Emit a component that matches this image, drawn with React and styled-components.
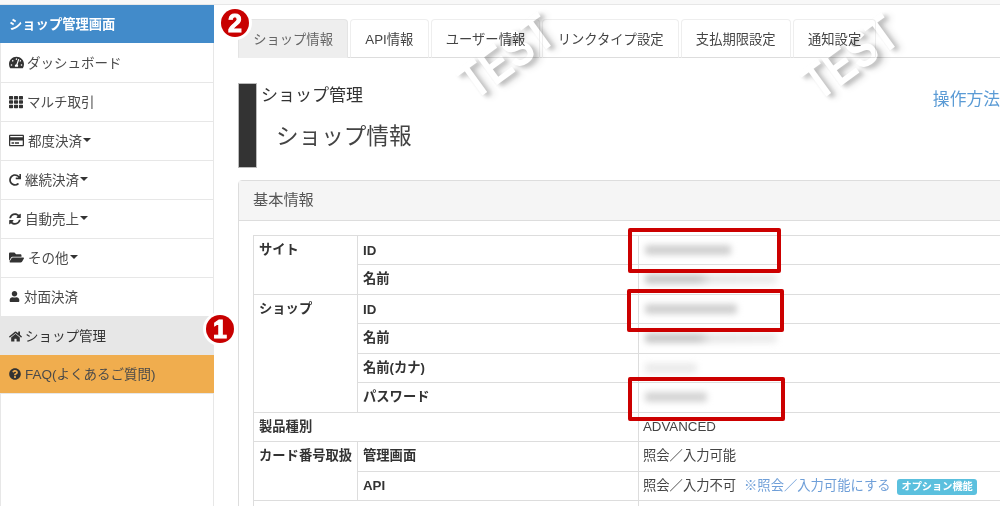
import React from "react";
import styled, { createGlobalStyle } from "styled-components";
import {
  FaTachometerAlt, FaTh, FaRegCreditCard, FaRedo, FaSyncAlt, FaFolderOpen,
  FaUser, FaHome, FaQuestionCircle,
} from "react-icons/fa";

const Global = createGlobalStyle`
  html, body { margin: 0; padding: 0; background: #fff; height: 100%; overflow: hidden; }
  body { font-family: "Liberation Sans", "Noto Sans CJK JP", sans-serif; font-size: 13.3px; color: #333; }
  * { box-sizing: border-box; }
`;

const Page = styled.div`
  position: relative;
  width: 1000px;
  height: 506px;
  overflow: hidden;
`;
const TopStrip = styled.div`
  height: 5px;
  background: #f8f8f8;
  border-bottom: 1px solid #e7e7e7;
`;
const Body = styled.div`
  display: flex;
  align-items: flex-start;
`;
const Sidebar = styled.nav`
  flex: 0 0 214px;
  height: 501px;
  background: #fff;
  border-right: 1px solid #e7e7e7;
  border-left: 1px solid #e7e7e7;
`;
const Brand = styled.div`
  height: 38px;
  margin: 0 -1px 1px -1px;
  padding: 0 0 2px 9px;
  background: #428bca;
  color: #fff;
  font-weight: 700;
  font-size: 13.3px;
  display: flex;
  align-items: center;
`;
const Item = styled.div`
  height: ${(p) => (p.$active ? 38 : 39)}px;
  display: flex;
  align-items: center;
  gap: ${(p) => p.$gap ?? 4}px;
  padding: 0 0 ${(p) => (p.$active ? 1 : 3)}px ${(p) => (p.$bg ? 9 : 8)}px;
  border-bottom: 1px solid #e7e7e7;
  color: ${(p) => (p.$active ? "#333" : "#4a4a4a")};
  font-size: 13.5px;
  background: ${(p) => p.$bg || "#fff"};
  margin: 0 ${(p) => (p.$bg ? "-1px" : "0")};
  svg { flex: none; color: #333; transform: translateY(1px); }
`;
const Caret = styled.span`
  flex: none;
  margin-left: -3px;
  width: 0;
  height: 0;
  border-top: 4px solid #333;
  border-left: 4px solid transparent;
  border-right: 4px solid transparent;
`;
const Main = styled.main`
  flex: none;
  width: 1100px;
  padding: 14px 0 0 24px;
`;
const Tabs = styled.div`
  display: flex;
  gap: 2px;
  height: 39px;
  border-bottom: 1px solid #ddd;
`;
const Tab = styled.div`
  height: 39px;
  padding: 0 14.2px;
  display: flex;
  align-items: center;
  border: 1px solid ${(p) => (p.$active ? "#e4e4e4" : "#eee")};
  border-bottom-color: ${(p) => (p.$active ? "#eee" : "#ddd")};
  border-radius: 4px 4px 0 0;
  background: ${(p) => (p.$active ? "#eee" : "#fff")};
  color: ${(p) => (p.$active ? "#666" : "#444")};
  font-size: 13.3px;
  white-space: nowrap;
`;
const TitleRow = styled.div`
  display: flex;
  width: 762px;
  margin-top: 25px;
  height: 85px;
`;
const TitleBar = styled.div`
  flex: 0 0 19px;
  background: #333;
  border: 1px solid #bbb;
  margin-right: 4px;
`;
const TitleText = styled.div`
  flex: 1;
  padding-top: 1px;
`;
const Crumb = styled.div`
  font-size: 17px;
  line-height: 24px;
  color: #333;
`;
const PageTitle = styled.h1`
  margin: 13px 0 0 15px;
  font-size: 22.6px;
  line-height: 32px;
  font-weight: 400;
  color: #444;
`;
const HelpLink = styled.a`
  margin-top: 1px;
  font-size: 16.8px;
  line-height: 32px;
  color: #5b9bd5;
  white-space: nowrap;
`;
const Panel = styled.section`
  margin-top: 12px;
  border: 1px solid #ddd;
  border-radius: 4px 0 0 0;
  width: 1000px;
`;
const PanelHead = styled.div`
  height: 40px;
  padding: 0 0 6px 14px;
  display: flex;
  align-items: center;
  background: #f5f5f5;
  border-bottom: 1px solid #ddd;
  font-size: 15.2px;
  color: #555;
`;
const PanelBody = styled.div`
  padding: 14px;
`;
const Table = styled.table`
  width: 100%;
  table-layout: fixed;
  border-collapse: collapse;
  font-size: 13.3px;
  line-height: 18.44px;
  color: #333;
  th, td {
    border: 1px solid #ddd;
    padding: 5px 4px;
    vertical-align: top;
    text-align: left;
    white-space: nowrap;
    overflow: visible;
  }
  th { font-weight: 700; padding-left: 5px; }
  td { color: #444; }
`;
const KeyCell = styled.th`
  && {
    padding-top: 6px;
    padding-bottom: 4px;
  }
`;
const Blurred = styled.span`
  display: block;
  height: 10px;
  margin: 4px 0 4px 2px;
  border-radius: 3px;
  background: ${(p) => p.$tone};
  filter: blur(3px);
`;
const NoteLink = styled.a`
  margin-left: 8px;
  color: #6f9fd8;
`;
const Label = styled.span`
  display: inline-block;
  margin-left: 7px;
  padding: 0 4px;
  height: 16px;
  line-height: 16px;
  border-radius: 3px;
  background: #5bc0de;
  color: #fff;
  font-weight: 700;
  font-size: 10.2px;
`;
const RedBox = styled.div`
  position: absolute;
  z-index: 5;
  left: ${(p) => p.$x}px;
  top: ${(p) => p.$y}px;
  width: ${(p) => p.$w}px;
  height: ${(p) => p.$h}px;
  border: 4px solid #cc0000;
  border-radius: 2px;
`;
const Badge = styled.div`
  position: absolute;
  z-index: 6;
  left: ${(p) => p.$x}px;
  top: ${(p) => p.$y}px;
  width: 28px;
  height: 28px;
  border-radius: 50%;
  background: #c80000;
  color: #fff;
  box-shadow: 0 0 0 3px #fff;
  display: flex;
  align-items: center;
  justify-content: center;
  font-weight: 700;
  font-size: 25px;
  line-height: 1;
  -webkit-text-stroke: 1px #fff;
`;
const Watermark = styled.div`
  position: absolute;
  z-index: 4;
  left: ${(p) => p.$cx - 60}px;
  top: ${(p) => p.$cy - 26}px;
  width: 120px;
  height: 52px;
  display: flex;
  align-items: center;
  justify-content: center;
  transform: rotate(-36deg) scaleX(0.78);
  color: #fff;
  font-weight: 700;
  font-size: 52px;
  line-height: 1;
  -webkit-text-stroke: 2px #fff;
  paint-order: stroke fill;
  mix-blend-mode: multiply;
  text-shadow: 3px 4px 5px rgba(0, 0, 0, 0.2), 6px 6px 9px rgba(0, 0, 0, 0.12);
`;

const menu = [
  { icon: <FaTachometerAlt size={15} />, text: "ダッシュボード", gap: 3 },
  { icon: <FaTh size={14} />, text: "マルチ取引" },
  { icon: <FaRegCreditCard size={15} />, text: "都度決済", caret: true },
  { icon: <FaRedo size={12} />, text: "継続決済", caret: true },
  { icon: <FaSyncAlt size={12} />, text: "自動売上", caret: true },
  { icon: <FaFolderOpen size={15} />, text: "その他", caret: true },
  { icon: <FaUser size={11} />, text: "対面決済" },
  { icon: <FaHome size={13} />, text: "ショップ管理", bg: "#e7e7e7", active: true, gap: 3 },
  { icon: <FaQuestionCircle size={12} />, text: "FAQ(よくあるご質問)", bg: "#f0ad4e" },
];
const tabs = ["ショップ情報", "API情報", "ユーザー情報", "リンクタイプ設定", "支払期限設定", "通知設定"];

const nameTone = "linear-gradient(90deg, #c9c9c9 0 40%, #e8e8e8 50%, #ececec 100%)";

export default function App() {
  return (
    <Page>
      <Global />
      <TopStrip />
      <Body>
        <Sidebar>
          <Brand>ショップ管理画面</Brand>
          {menu.map((m) => (
            <Item key={m.text} $bg={m.bg} $active={m.active} $gap={m.gap}>
              {m.icon}
              <span>{m.text}</span>
              {m.caret && <Caret />}
            </Item>
          ))}
        </Sidebar>
        <Main>
          <Tabs>
            {tabs.map((t, i) => (
              <Tab key={t} $active={i === 0}>{t}</Tab>
            ))}
          </Tabs>
          <TitleRow>
            <TitleBar />
            <TitleText>
              <Crumb>ショップ管理</Crumb>
              <PageTitle>ショップ情報</PageTitle>
            </TitleText>
            <HelpLink>操作方法</HelpLink>
          </TitleRow>
          <Panel>
            <PanelHead>基本情報</PanelHead>
            <PanelBody>
              <Table>
                <colgroup>
                  <col style={{ width: 104 }} />
                  <col style={{ width: 281 }} />
                  <col />
                </colgroup>
                <tbody>
                  <tr>
                    <th rowSpan={2}>サイト</th>
                    <KeyCell>ID</KeyCell>
                    <td><Blurred style={{ width: 86 }} $tone="#d0d0d0" /></td>
                  </tr>
                  <tr>
                    <th>名前</th>
                    <td><Blurred style={{ width: 132 }} $tone={nameTone} /></td>
                  </tr>
                  <tr>
                    <th rowSpan={4}>ショップ</th>
                    <KeyCell>ID</KeyCell>
                    <td><Blurred style={{ width: 92 }} $tone="#d0d0d0" /></td>
                  </tr>
                  <tr>
                    <th>名前</th>
                    <td><Blurred style={{ width: 132 }} $tone={nameTone} /></td>
                  </tr>
                  <tr>
                    <th>名前(カナ)</th>
                    <td><Blurred style={{ width: 52 }} $tone="#ebebeb" /></td>
                  </tr>
                  <tr>
                    <th>パスワード</th>
                    <td><Blurred style={{ width: 62 }} $tone="#d4d4d4" /></td>
                  </tr>
                  <tr>
                    <th colSpan={2}>製品種別</th>
                    <td>ADVANCED</td>
                  </tr>
                  <tr>
                    <th rowSpan={2}>カード番号取扱</th>
                    <th>管理画面</th>
                    <td>照会／入力可能</td>
                  </tr>
                  <tr>
                    <th>API</th>
                    <td>
                      照会／入力不可
                      <NoteLink>※照会／入力可能にする</NoteLink>
                      <Label>オプション機能</Label>
                    </td>
                  </tr>
                  <tr>
                    <th colSpan={2}>&nbsp;</th>
                    <td>&nbsp;</td>
                  </tr>
                </tbody>
              </Table>
            </PanelBody>
          </Panel>
        </Main>
      </Body>
      <RedBox $x={628} $y={228} $w={153} $h={45} />
      <RedBox $x={627} $y={289} $w={157} $h={43} />
      <RedBox $x={628} $y={377} $w={157} $h={44} />
      <Badge $x={206} $y={315}>1</Badge>
      <Badge $x={221} $y={9}>2</Badge>
      <Watermark $cx={506} $cy={56}>TEST</Watermark>
      <Watermark $cx={850} $cy={57}>TEST</Watermark>
    </Page>
  );
}
